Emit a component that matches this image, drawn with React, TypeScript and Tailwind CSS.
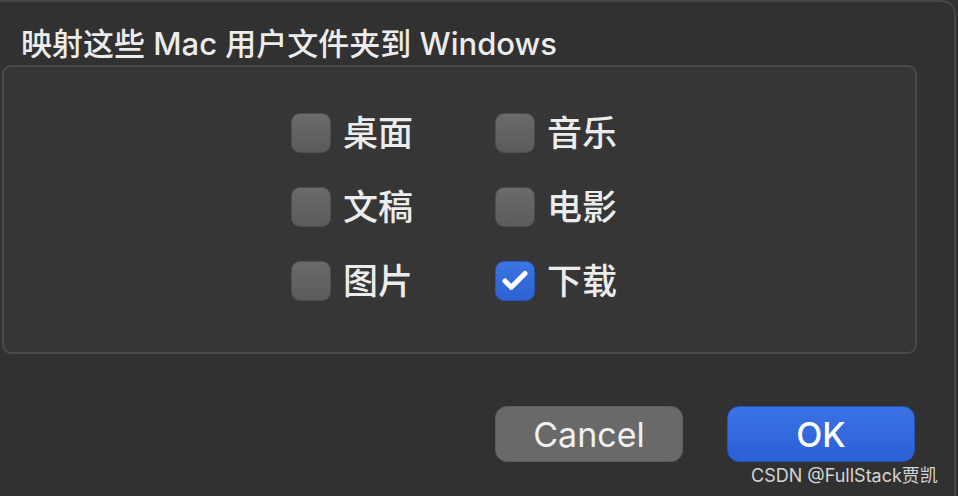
import React from "react";
import { Check } from "lucide-react";

const font = { fontFamily: "Inter, 'Noto Sans CJK SC', sans-serif" };

const folders = [
  { label: "桌面", checked: false },
  { label: "音乐", checked: false },
  { label: "文稿", checked: false },
  { label: "电影", checked: false },
  { label: "图片", checked: false },
  { label: "下载", checked: true },
];

const Box = ({ checked }: { checked: boolean }) =>
  checked ? (
    <span className="flex h-[40px] w-[40px] items-center justify-center rounded-[9px] border border-[#2a56b8] bg-gradient-to-b from-[#3c75e2] to-[#2d62d2]">
      <Check className="h-[30px] w-[30px] text-white" strokeWidth={4} />
    </span>
  ) : (
    <span className="h-[40px] w-[40px] rounded-[9px] border border-[#4e4e4e] bg-gradient-to-b from-[#6a6a6a] to-[#5b5b5b]" />
  );

export default function App() {
  return (
    <div
      className="relative h-[496px] w-[958px] overflow-hidden bg-[#313131] text-[#ececec]"
      style={{ fontFamily: "Inter, 'Noto Sans CJK SC', sans-serif" }}
    >
      <div className="h-[496px] w-[956px] rounded-tr-[14px] border-t-2 border-r-2 border-[#464646]">
        <div className="h-[63px] pl-[21px] pt-[23px] text-[31px] leading-[38px] font-medium">
          映射这些 Mac 用户文件夹到 Windows
        </div>

        <div className="ml-[2px] h-[289px] w-[915px] rounded-[9px] border-2 border-[#4a4a4a] bg-[#363636]">
          <div className="grid grid-cols-[204px_auto] gap-y-[34px] pl-[287px] pt-[46px]">
            {folders.map((f, i) => (
              <div key={i} className="flex items-center gap-[12px]">
                <Box checked={f.checked} />
                <span className="text-[35px] leading-[40px] font-medium">{f.label}</span>
              </div>
            ))}
          </div>
        </div>

        <div className="mt-[52px] flex gap-[44px] pl-[495px]">
          <button
            className="h-[56px] w-[188px] rounded-[12px] border border-[#5e5e5e] bg-[#696969] text-[34px] text-[#f0f0f0]"
            style={font}
          >
            Cancel
          </button>
          <button
            className="h-[56px] w-[188px] rounded-[12px] border border-[#2452b8] bg-gradient-to-b from-[#3a73e6] to-[#2b60d6] text-[34px] font-medium text-white"
            style={font}
          >
            OK
          </button>
        </div>
      </div>

      <span className="absolute left-[751px] top-[464px] text-[18px] leading-[24px] text-[#d4d4d4]">
        CSDN @FullStack贾凯
      </span>
    </div>
  );
}
